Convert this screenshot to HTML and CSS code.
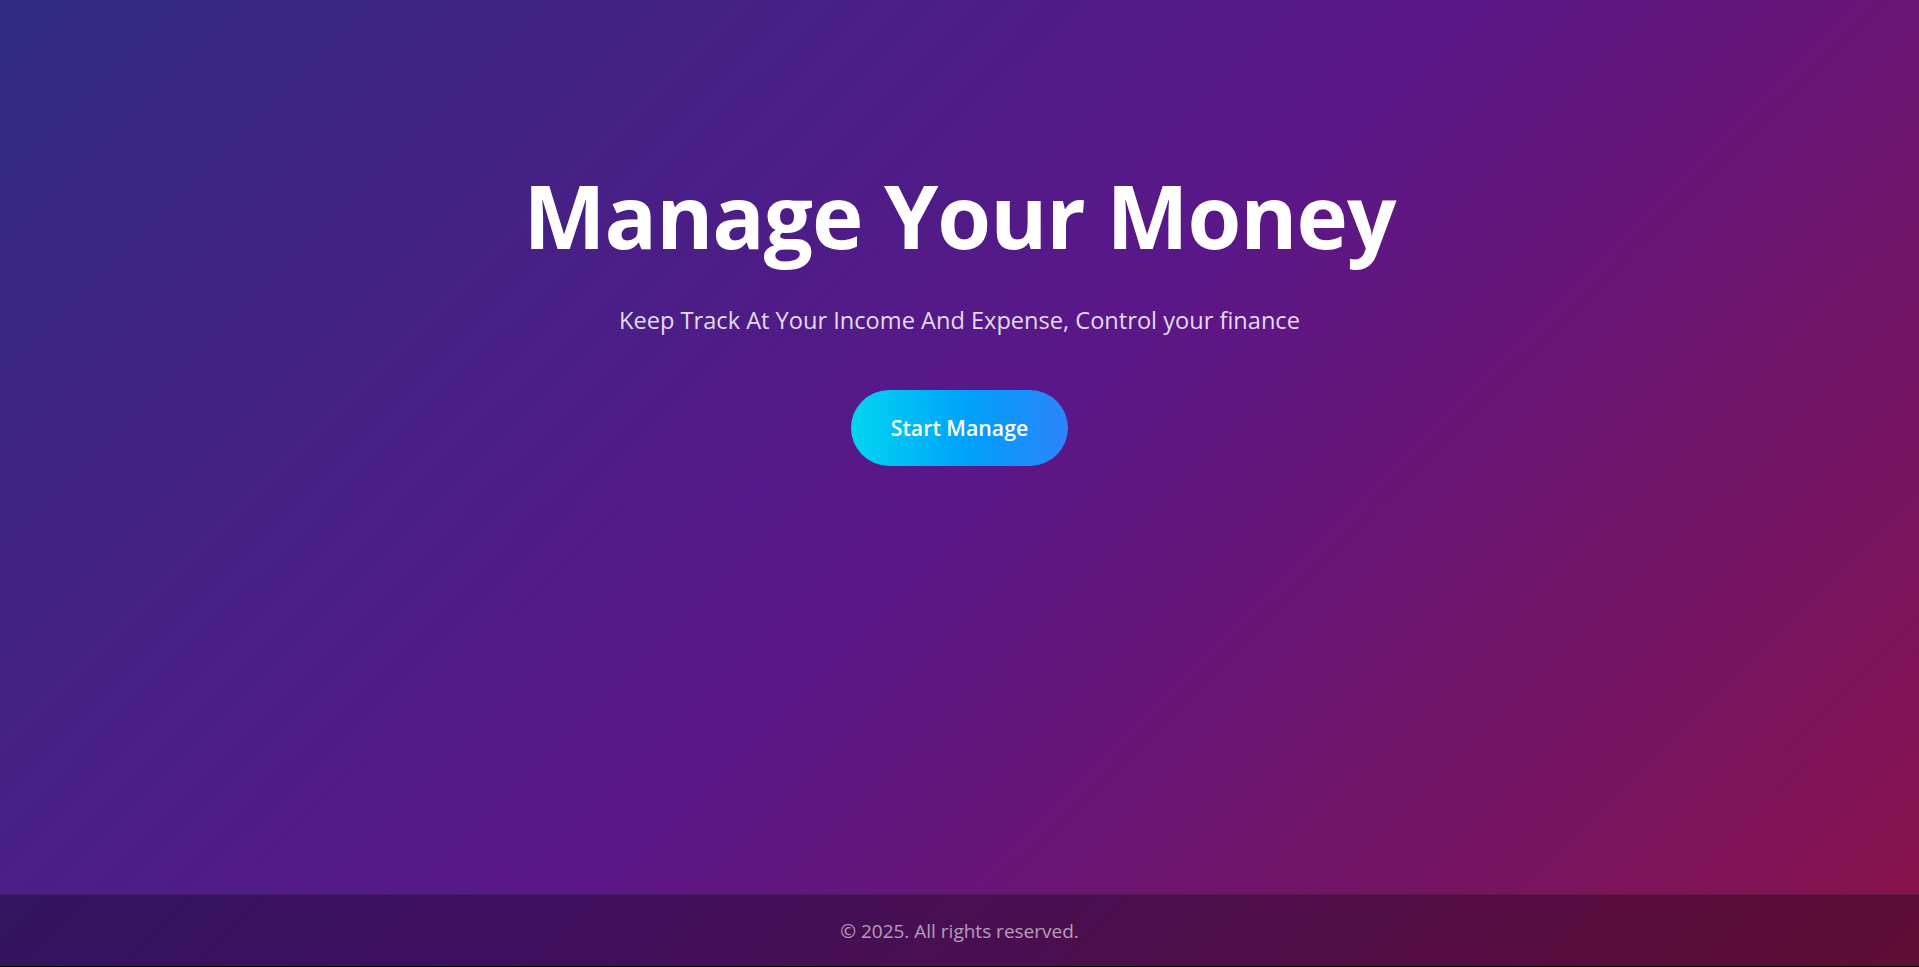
FILE: index.html
```html
<!DOCTYPE html>
<html lang="en">
<head>
<meta charset="utf-8">
<title>Manage Your Money</title>
<link rel="stylesheet" href="styles.css">
</head>
<body>
<div class="page">
  <main class="hero">
    <h1 class="hero-title">Manage Your Money</h1>
    <p class="hero-subtitle">Keep Track At Your Income And Expense, Control your finance</p>
    <a class="hero-button" href="#">Start Manage</a>
  </main>
  <footer class="footer">
    <p class="footer-text">© 2025. All rights reserved.</p>
  </footer>
</div>
</body>
</html>
```

FILE: styles.css
```css
html {
  background: #000;
}
body {
  margin: 0;
  font-family: "Open Sans", "Noto Sans", sans-serif;
  color: #fff;
}
.page {
  height: calc(100vh - 1px);
  display: flex;
  flex-direction: column;
  background: linear-gradient(135deg, #302b82 0%, #5a1789 50%, #88134a 100%);
}
.hero {
  flex: 1;
  display: flex;
  flex-direction: column;
  align-items: center;
  padding-top: 163px;
}
.hero-title {
  margin: 0;
  font-size: 87px;
  font-weight: 700;
  line-height: 1.2;
  letter-spacing: -1px;
}
.hero-subtitle {
  margin: 38px 0 0;
  font-size: 23.6px;
  line-height: 1.3;
  color: rgba(255, 255, 255, 0.85);
}
.hero-button {
  margin-top: 54px;
  display: inline-block;
  padding: 25px 40px;
  border-radius: 40px;
  background: linear-gradient(90deg, #00d6f0 0%, #00a0fa 55%, #2c84fc 100%);
  color: #fff;
  font-size: 21.3px;
  font-weight: 600;
  line-height: 26px;
  text-decoration: none;
}
.footer {
  height: 71px;
  display: flex;
  align-items: center;
  justify-content: center;
  background: rgba(0, 0, 0, 0.3);
  border-top: 1px solid rgba(255, 255, 255, 0.05);
}
.footer-text {
  margin: 0;
  font-size: 19px;
  color: rgba(255, 255, 255, 0.6);
}
```
